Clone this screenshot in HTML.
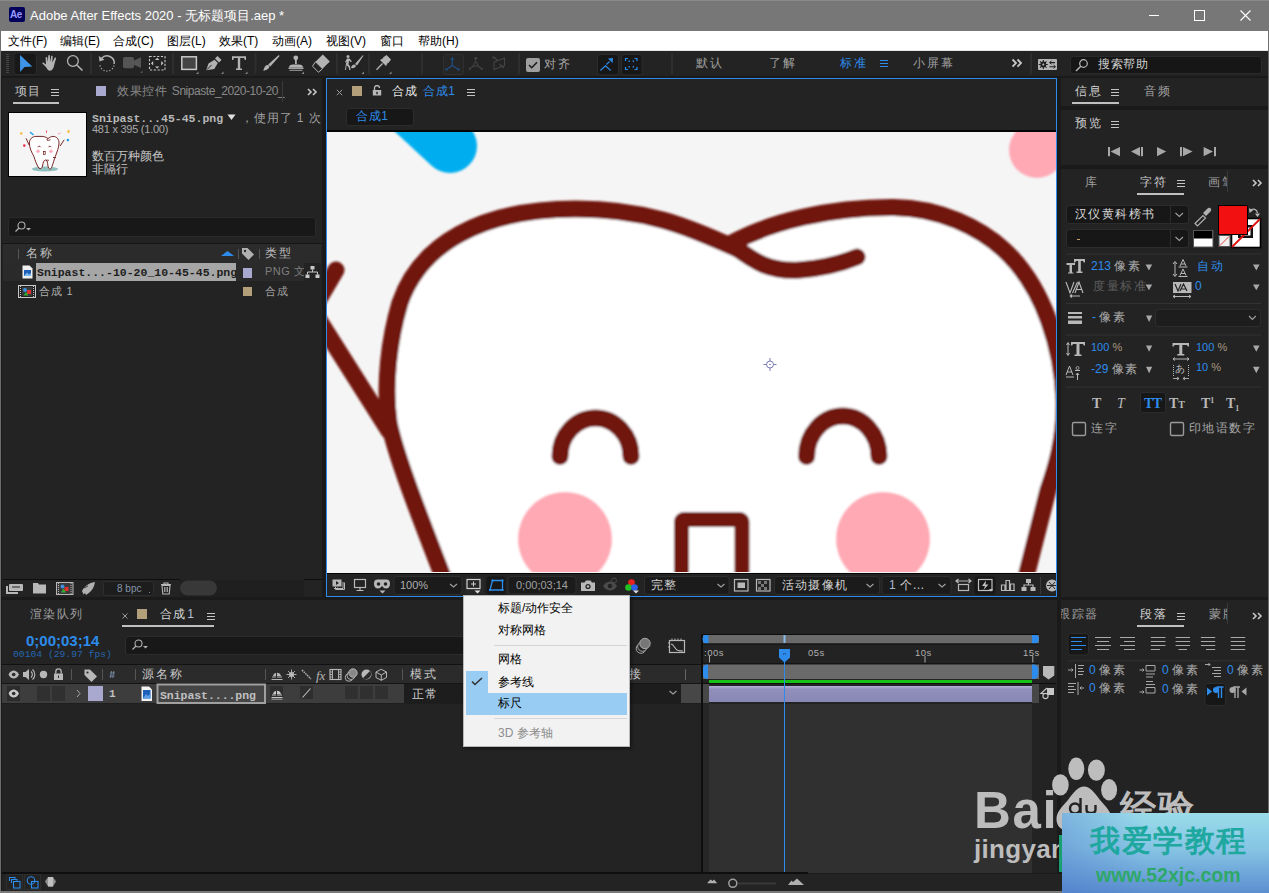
<!DOCTYPE html>
<html><head><meta charset="utf-8">
<style>
*{box-sizing:border-box;margin:0;padding:0}
html,body{width:1269px;height:893px;overflow:hidden;background:#1a1a1a;font-family:"Liberation Sans",sans-serif;font-size:12px;color:#a8a8a8}
.a{position:absolute}
.t{position:absolute;white-space:nowrap;line-height:1}
</style></head><body>
<!-- window border -->
<div class="a" style="left:0;top:0;width:1269px;height:893px;background:#1a1a1a"></div>
<!-- title bar -->
<div class="a" id="title" style="left:0;top:0;width:1269px;height:31px;background:#777"></div>
<div class="a" style="left:0;top:0;width:1269px;height:1px;background:#8a8a8a"></div>
<!-- menu bar -->
<div class="a" id="menu" style="left:0;top:31px;width:1269px;height:20px;background:#fff"></div>
<div class="a" style="left:0;top:50px;width:1269px;height:1px;background:#e6e6e6"></div>
<!-- toolbar -->
<div class="a" id="tool" style="left:1px;top:51px;width:1268px;height:25px;background:#232323"></div>
<!-- left gray border -->
<div class="a" style="left:0;top:31px;width:1px;height:862px;background:#6e6e6e"></div>
<!-- project panel -->
<div class="a" id="proj" style="left:2px;top:78px;width:320px;height:519px;background:#232323"></div>
<!-- comp viewer -->
<div class="a" id="comp" style="left:326px;top:78px;width:731px;height:519px;background:#232323;border:1px solid #2d8ceb"></div>
<!-- right panels -->
<div class="a" style="left:1061px;top:78px;width:208px;height:28px;background:#232323"></div>
<div class="a" style="left:1061px;top:110px;width:208px;height:55px;background:#232323"></div>
<div class="a" style="left:1061px;top:169px;width:208px;height:428px;background:#232323"></div>
<div class="a" style="left:1061px;top:600px;width:208px;height:273px;background:#232323"></div>
<!-- timeline -->
<div class="a" id="tl" style="left:2px;top:600px;width:1055px;height:273px;background:#232323"></div>
<!-- status -->
<div class="a" style="left:2px;top:874px;width:1267px;height:19px;background:#232323"></div>

<!-- TITLE -->
<div class="a" style="left:9px;top:7px;width:16px;height:15px;background:#00005b;border-radius:2px"></div>
<div class="t" style="left:10px;top:10px;font-size:10px;font-weight:bold;color:#9999ff;letter-spacing:-0.5px">Ae</div>
<div class="t" style="left:30px;top:9px;font-size:13px;color:#fff">Adobe After Effects 2020 - 无标题项目.aep *</div>
<div class="a" style="left:1149px;top:15px;width:10px;height:1px;background:#fff"></div>
<div class="a" style="left:1194px;top:10px;width:11px;height:11px;border:1px solid #fff"></div>
<svg class="a" style="left:1239px;top:9px" width="13" height="13"><path d="M1.5 1.5L11.5 11.5M11.5 1.5L1.5 11.5" stroke="#fff" stroke-width="1.1"/></svg>
<!-- MENU -->
<div class="t" style="left:8px;top:35px;color:#000">文件(F)</div>
<div class="t" style="left:60px;top:35px;color:#000">编辑(E)</div>
<div class="t" style="left:113px;top:35px;color:#000">合成(C)</div>
<div class="t" style="left:167px;top:35px;color:#000">图层(L)</div>
<div class="t" style="left:219px;top:35px;color:#000">效果(T)</div>
<div class="t" style="left:272px;top:35px;color:#000">动画(A)</div>
<div class="t" style="left:326px;top:35px;color:#000">视图(V)</div>
<div class="t" style="left:380px;top:35px;color:#000">窗口</div>
<div class="t" style="left:418px;top:35px;color:#000">帮助(H)</div>

<!-- TOOLBAR -->
<svg class="a" style="left:0;top:0" width="1269" height="78" viewBox="0 0 1269 78">
<g fill="#474747">
<rect x="6" y="54" width="3" height="1"/><rect x="6" y="56" width="3" height="1"/><rect x="6" y="58" width="3" height="1"/><rect x="6" y="60" width="3" height="1"/><rect x="6" y="62" width="3" height="1"/><rect x="6" y="64" width="3" height="1"/><rect x="6" y="66" width="3" height="1"/><rect x="6" y="68" width="3" height="1"/><rect x="6" y="70" width="3" height="1"/><rect x="6" y="72" width="3" height="1"/>
</g>
<rect x="14" y="53" width="22.5" height="21.5" rx="2.5" fill="#181818" stroke="#2b2b2b"/>
<path d="M20 55L32.3 66.5L24.5 67L20.1 72Z" fill="#3d94e8"/>
<!-- hand -->
<path d="M45.5 66.5C44 65 42.5 63.8 42.3 63.2C42.2 62.5 43.2 62.3 44 62.9L46 64.5L45.6 57.5C45.6 56.8 47 56.8 47.2 57.5L47.8 62L48.3 55.6C48.4 54.9 49.8 54.9 49.9 55.6L50.1 62L51.2 56.3C51.4 55.6 52.8 55.7 52.7 56.5L52.3 62.5L54.7 57.8C55.1 57.1 56.3 57.4 56.1 58.2L54.2 65C53.6 68.5 52 70.8 49.5 70.8C47.8 70.8 46.8 68 45.5 66.5Z" fill="#b3b3b3"/>
<!-- zoom -->
<circle cx="72.9" cy="61" r="5.4" fill="none" stroke="#b3b3b3" stroke-width="1.3"/>
<path d="M76.8 65L82.5 70.5" stroke="#b3b3b3" stroke-width="1.6"/>
<rect x="90" y="53" width="2" height="21" fill="#2e2e2e"/>
<!-- rotate -->
<path d="M114 65.5A7.2 7.2 0 0 1 99.8 64.5" fill="none" stroke="#b3b3b3" stroke-width="1.3" stroke-dasharray="1.1 1.9" />
<path d="M101.5 58.5A7.2 7.2 0 0 1 114.2 64" fill="none" stroke="#b3b3b3" stroke-width="1.5"/>
<path d="M98.8 56L99.5 61.5L104.5 59.8Z" fill="#b3b3b3"/>
<!-- camera -->
<rect x="123" y="57" width="11" height="11.2" rx="2" fill="#555"/>
<path d="M133 61L141 57.2V68L133 64.5Z" fill="#555"/>
<path d="M142.5 70.5V73H140Z" fill="#555"/>
<!-- pan behind -->
<rect x="149.5" y="56.5" width="15.5" height="13.5" fill="none" stroke="#c8c8c8" stroke-width="1.1" stroke-dasharray="2.2 1.6"/>
<path d="M157.2 57.8L159.4 60H155Z M157.2 68.6L159.4 66.4H155Z M151 63.2L153.2 61V65.4Z M163.4 63.2L161.2 61V65.4Z" fill="#c8c8c8"/>
<rect x="172" y="53" width="2" height="21" fill="#2e2e2e"/>
<!-- rect tool -->
<rect x="181.8" y="56.8" width="14.6" height="12.6" fill="#444" stroke="#c8c8c8" stroke-width="1.5"/>
<path d="M198.5 71.5V74H196Z M223.5 71.5V74H221Z M247.5 71.5V74H245Z M304 71.5V74H301.5Z M364 71.5V74H361.5Z M391.5 71.5V74H389Z" fill="#8a8a8a"/>
<!-- pen -->
<path d="M206.2 70.3L208.5 63.5L214.5 59.8L217.8 63L214.3 69Z" fill="#b3b3b3"/>
<path d="M207 69.6L211.7 64.9" stroke="#232323" stroke-width="1"/>
<path d="M215 58.5L217.5 56L221.5 60L219 62.5Z" fill="#b3b3b3"/>
<!-- type -->
<path d="M232 56.2H246V60H244.8L244 58H240.2V68.5H242V70H236V68.5H237.8V58H234L233.2 60H232Z" fill="#b3b3b3"/>
<rect x="254.5" y="53" width="2" height="21" fill="#2e2e2e"/>
<!-- brush -->
<path d="M263.3 70.8C264 68 265 65.5 267 65C268 64.8 269.2 65.5 269.5 66.5C269 69 266 70.5 263.3 70.8Z" fill="#b3b3b3"/>
<path d="M268.2 64.5L278.2 55.5C279.3 54.9 279.7 55.4 279.2 56.5L270.3 66.5Z" fill="#b3b3b3"/>
<!-- stamp -->
<circle cx="295.8" cy="57.8" r="2.4" fill="#b3b3b3"/>
<rect x="295" y="59" width="1.8" height="5" fill="#b3b3b3"/>
<path d="M289 67.5C289 65.5 290.5 64.5 293 64.5H299C301.5 64.5 303 65.5 303 67.5Z" fill="#b3b3b3"/>
<rect x="288.5" y="67.5" width="15" height="1.4" fill="#b3b3b3"/>
<rect x="289.5" y="69.8" width="13" height="0.9" fill="#b3b3b3"/>
<!-- eraser -->
<path d="M322.8 54.5L329.8 61.5L322.5 68.8L315.5 61.8Z" fill="#b3b3b3"/>
<path d="M315.5 61.8L322.5 68.8L318.5 72.3L312.5 66.2Z" fill="#232323" stroke="#b3b3b3" stroke-width="1"/>
<rect x="336" y="53" width="2" height="21" fill="#2e2e2e"/>
<!-- roto -->
<circle cx="348" cy="56.5" r="1.5" fill="#b3b3b3"/>
<path d="M345 62L347 58.5H349.5L352 61.5L350.5 62L349 60.5L348.5 64.5L350 66L350.5 70H349.3L348.5 67L346.5 65.2L346 70H345L346 63.5L346.8 61L345.8 62.5Z" fill="#b3b3b3"/>
<path d="M351 68C351.5 66 352.5 64.5 354.5 64.5L356 66C355.5 67.5 353.5 68.5 351 68Z" fill="#b3b3b3"/>
<path d="M355 64L362.5 55.5C363.2 55 363.5 55.3 363.3 56L357 65.5Z" fill="#b3b3b3"/>
<rect x="368" y="53" width="2" height="21" fill="#2e2e2e"/>
<!-- pin -->
<path d="M383 57.5L386.5 55L391 59.5L388.5 63Z" fill="#b3b3b3"/>
<path d="M380 60L386 56.5L389.5 60L386 66Z" fill="#b3b3b3"/>
<path d="M382.5 63.5L376.5 69.8" stroke="#b3b3b3" stroke-width="1.3"/>
<rect x="421" y="53" width="2" height="21" fill="#2e2e2e"/>
<!-- 3d axis -->
<rect x="443.5" y="54.5" width="20" height="20" rx="2.5" fill="#262626" stroke="#2f2f2f"/>
<path d="M452.3 59V65.4L446.5 69.6M452.3 65.4L458.5 69.6" fill="none" stroke="#1f5083" stroke-width="1.2"/>
<path d="M452.3 57L454.5 59.8H450.1Z M445.2 70.6L445.8 67.8L448 70.2Z M459.8 70.6L459.2 67.8L457 70.2Z" fill="#1f5083"/>
<g stroke="#454545" stroke-width="1.1" fill="none">
<path d="M475.7 58.5V62.5"/><circle cx="475.7" cy="64.4" r="1.9"/><path d="M474 65.5L469.8 68.8M477.4 65.5L481.6 68.8"/>
<path d="M494 62L504.5 58V65.5L494 69.5Z M494.5 57.5L497.5 60.5 M499.5 64L504 68"/>
</g>
<path d="M475.7 56.5L477.8 59H473.6Z M468.6 70L469 67.3L471 69.5Z M482.8 70L482.4 67.3L480.4 69.5Z M492.5 56.5L495.5 56.8L492.8 59.5Z" fill="#454545"/>
<rect x="518" y="53" width="2" height="21" fill="#2e2e2e"/>
<rect x="526" y="58" width="14" height="14" rx="2" fill="#9f9f9f"/>
<path d="M529 65L531.7 67.7L537 62.3" fill="none" stroke="#1a1a1a" stroke-width="1.6"/>
<rect x="597.5" y="54.5" width="21" height="20.5" rx="2.5" fill="#171717" stroke="#2c2c2c"/>
<path d="M600.4 70.5L605.5 65.9L610.7 70.5" fill="none" stroke="#2d8ceb" stroke-width="1.2"/>
<path d="M606.5 64.5L609.5 61.5" stroke="#2d8ceb" stroke-width="1.1"/>
<path d="M613 58L612.6 63L608 58.4Z" fill="#2d8ceb"/>
<rect x="621.5" y="54.5" width="20.5" height="20.5" rx="2.5" fill="#171717" stroke="#2c2c2c"/>
<path d="M625.5 61V58.5H628 M634.5 58.5H637V61 M637 67V69.5H634.5 M628 69.5H625.5V67" fill="none" stroke="#2d8ceb" stroke-width="1.2"/>
<path d="M629 62V61H630 M632.5 61H633.5V62 M633.5 66V67H632.5 M630 67H629V66" fill="none" stroke="#2d8ceb" stroke-width="1.1"/>
<rect x="671" y="53" width="2" height="21" fill="#2e2e2e"/>
<rect x="1030" y="53" width="2" height="21" fill="#2e2e2e"/>
<!-- workspace icon -->
<rect x="1038" y="59" width="19" height="11" rx="1" fill="#b4b4b4"/>
<circle cx="1043.3" cy="64.5" r="2.9" fill="#1e1e1e"/>
<path d="M1043.3 60V69M1038.8 64.5H1047.8M1040.1 61.3L1046.5 67.7M1046.5 61.3L1040.1 67.7" stroke="#1e1e1e" stroke-width="1.1"/>
<circle cx="1043.3" cy="64.5" r="1.1" fill="#b4b4b4"/>
<path d="M1050 62.6H1055M1049.5 66.7H1055" stroke="#1e1e1e" stroke-width="1.1"/>
<path d="M1051.5 61L1049.5 62.6L1051.5 64.2M1053.5 65.1L1055.5 66.7L1053.5 68.3" fill="none" stroke="#1e1e1e" stroke-width="1"/>
<path d="M1012.5 59.5L1016 63.1L1012.5 66.7M1017.5 59.5L1021 63.1L1017.5 66.7" fill="none" stroke="#c8c8c8" stroke-width="1.8"/>
<path d="M880 60.5H888M880 63.5H888M880 66.5H888" stroke="#2d8ceb" stroke-width="1.1"/>
</svg>
<div class="t" style="left:544px;top:58px;font-size:12px;letter-spacing:2px;color:#a8a8a8">对齐</div>
<div class="t" style="left:696px;top:57px;font-size:12px;letter-spacing:2px;color:#a0a0a0">默认</div>
<div class="t" style="left:769px;top:57px;font-size:12px;letter-spacing:2px;color:#a0a0a0">了解</div>
<div class="t" style="left:840px;top:57px;font-size:12px;letter-spacing:2px;color:#2d8ceb">标准</div>
<div class="t" style="left:913px;top:57px;font-size:12px;letter-spacing:2px;color:#a0a0a0">小屏幕</div>
<div class="a" style="left:1070px;top:56px;width:192px;height:18px;background:#161616;border-radius:3px;border:1px solid #2a2a2a"></div>
<svg class="a" style="left:1074px;top:58px" width="16" height="14"><circle cx="9.5" cy="5.5" r="3.8" fill="none" stroke="#b8b8b8" stroke-width="1.2"/><path d="M6.8 8.3L2 13" stroke="#b8b8b8" stroke-width="1.4"/></svg>
<div class="t" style="left:1098px;top:58px;font-size:12px;letter-spacing:0.5px;color:#d0d0d0">搜索帮助</div>

<!-- PROJECT PANEL -->
<div class="t" style="left:15px;top:85px;font-size:12px;letter-spacing:1px;color:#c4c4c4">项目</div>
<svg class="a" style="left:50px;top:88px" width="10" height="9"><path d="M1 1.5H9M1 4.5H9M1 7.5H9" stroke="#c4c4c4" stroke-width="1"/></svg>
<div class="a" style="left:13px;top:102px;width:46px;height:2px;background:#c0c0c0"></div>
<div class="a" style="left:96px;top:86px;width:10px;height:10px;background:#a9a9cf"></div>
<div class="t" style="left:117px;top:85px;font-size:12px;letter-spacing:0.7px;color:#8a8a8a">效果控件 <span style="letter-spacing:-0.45px">Snipaste_2020-10-20_</span></div>
<div class="a" style="left:282px;top:81px;width:1px;height:21px;background:#3a3a3a"></div>
<svg class="a" style="left:307px;top:88px" width="12" height="8"><path d="M1 1L4 4L1 7M6 1L9 4L6 7" fill="none" stroke="#c8c8c8" stroke-width="1.6"/></svg>
<div class="a" style="left:8px;top:112px;width:79px;height:65px;background:#f5f5f5;border:1px solid #000"></div>
<svg class="a" style="left:9px;top:113px" width="77" height="63" viewBox="9 113 77 63">
<ellipse cx="45" cy="169" rx="13" ry="2.6" fill="#8fbfbf"/>
<path d="M36 136.4C32 136.4 29.4 139.5 29.4 143C29.4 148 31.5 152 33.9 156.4C35 160 37 166 39 168.2C40.5 169 42 168.5 42.5 166L43 163.5C43.5 161 45 159.5 46.2 160C47.5 161 47.5 163 47.8 165C48.2 168 49 169 50.3 169C51.8 168.5 53 163 55.3 156.4C57 152 59 147 59 143C59 139 56.5 136.4 53 136.4C51 136.4 49.5 137.5 48 138.6C46.5 137.5 44.5 136.4 42 136.4Z" fill="#fff" stroke="#6a1010" stroke-width="0.9"/>
<path d="M48 138.6C47 139.5 46.5 139.8 47 140.2C48 140.5 49.5 140.3 50.5 139.8" fill="none" stroke="#6a1010" stroke-width="0.8"/>
<path d="M53 157.5H56M46 160.5C47 160 48 160 49 160.5" stroke="#6a1010" stroke-width="0.8" fill="none"/>
<path d="M37.8 147.2A1.5 1.5 0 0 1 40.6 147.2M48.4 147.2A1.5 1.5 0 0 1 51.2 147.2" fill="none" stroke="#6a1010" stroke-width="0.8"/>
<circle cx="38" cy="151.2" r="1.7" fill="#ffaab8"/><circle cx="51" cy="151.2" r="1.7" fill="#ffaab8"/>
<rect x="43.6" y="151.5" width="1.6" height="3" fill="none" stroke="#6a1010" stroke-width="0.7"/>
<path d="M26.1 138.3L29.1 145M64.2 139.8L60.1 146" stroke="#6a1010" stroke-width="0.9"/>
<circle cx="21.3" cy="133.4" r="1.2" fill="#f6b52a"/>
<path d="M30.5 132.5L33 134.5" stroke="#1fa0e8" stroke-width="1.6" stroke-linecap="round"/>
<path d="M46.5 130.5V132.8" stroke="#f05070" stroke-width="1.1"/>
<path d="M58 134L60.5 133" stroke="#f8a8b8" stroke-width="1.2"/>
<rect x="67.5" y="130.2" width="2" height="2.6" fill="#f6b52a"/>
<circle cx="24.3" cy="145.6" r="1.3" fill="#f03050"/>
<circle cx="67.9" cy="140.1" r="1.3" fill="#1fa0e8"/>
</svg>
<div class="t" style="left:92px;top:112px;font:bold 11.5px 'Liberation Mono',monospace;color:#b8b8b8">Snipast...45-45.png</div>
<svg class="a" style="left:227px;top:114px" width="9" height="7"><path d="M0.5 0.5H8.5L4.5 6Z" fill="#e0e0e0"/></svg>
<div class="t" style="left:241px;top:112px;font-size:12px;letter-spacing:0.9px;color:#a0a0a0">，使用了 1 次</div>
<div class="t" style="left:92px;top:124px;font-size:11px;letter-spacing:-0.25px;color:#a8a8a8">481 x 395 (1.00)</div>
<div class="t" style="left:92px;top:150px;font-size:12px;color:#c8c8c8">数百万种颜色</div>
<div class="t" style="left:92px;top:163px;font-size:12px;color:#c8c8c8">非隔行</div>
<div class="a" style="left:8px;top:217px;width:308px;height:20px;background:#181818;border:1px solid #2a2a2a;border-radius:3px"></div>
<svg class="a" style="left:14px;top:221px" width="20" height="12"><circle cx="7.5" cy="4.5" r="3.5" fill="none" stroke="#b0b0b0" stroke-width="1.1"/><path d="M5 7L1.5 10.5" stroke="#b0b0b0" stroke-width="1.3"/><path d="M12 7H17L14.5 9.5Z" fill="#b0b0b0"/></svg>
<div class="a" style="left:2px;top:243px;width:320px;height:1px;background:#151515"></div>
<div class="a" style="left:3px;top:244px;width:318px;height:19px;background:#2b2b2b"></div>
<div class="a" style="left:18px;top:249px;width:1px;height:10px;background:#555"></div>
<div class="t" style="left:26px;top:247px;font-size:12px;letter-spacing:1.5px;color:#c0c0c0">名称</div>
<svg class="a" style="left:221px;top:251px" width="13" height="5"><path d="M0 5L6.5 0L13 5Z" fill="#2d8ceb"/></svg>
<div class="a" style="left:238px;top:249px;width:1px;height:10px;background:#555"></div>
<svg class="a" style="left:241px;top:247px" width="14" height="13"><path d="M1 1H6.5L13 7.5L7.5 13L1 6.5Z" fill="#b0b0b0"/><circle cx="4" cy="4" r="1.2" fill="#2b2b2b"/></svg>
<div class="a" style="left:259px;top:249px;width:1px;height:10px;background:#555"></div>
<div class="t" style="left:265px;top:247px;font-size:12px;letter-spacing:1.5px;color:#c0c0c0">类型</div>
<div class="a" style="left:3px;top:263px;width:301px;height:18px;background:#2a2a2a"></div>
<div class="a" style="left:36px;top:263px;width:200px;height:18px;background:#a6a6a6"></div>
<div class="t" style="left:37px;top:266px;width:199px;overflow:hidden;font:bold 11.5px 'Liberation Mono',monospace;color:#1e1e1e">Snipast...-10-20_10-45-45.png</div>
<svg class="a" style="left:22px;top:265px" width="11" height="14"><path d="M0.5 0.5H7.5L10.5 3.5V13.5H0.5Z" fill="#f0f0f0"/><rect x="2" y="5" width="7" height="6" fill="#1e5fb8"/><path d="M2 11L5 7.5L7 9.5L9 8V11Z" fill="#7ab8f0"/></svg>
<div class="a" style="left:243px;top:268px;width:9px;height:10px;background:#a9a9cf"></div>
<div class="t" style="left:265px;top:266px;font-size:11px;letter-spacing:0.5px;color:#7e7e7e;width:39px;overflow:hidden">PNG 文件</div>
<svg class="a" style="left:305px;top:265px" width="15" height="14"><rect x="5.5" y="1" width="4" height="3.5" fill="#c8c8c8"/><rect x="0.5" y="9.5" width="4" height="3.5" fill="#c8c8c8"/><rect x="10.5" y="9.5" width="4" height="3.5" fill="#c8c8c8"/><path d="M7.5 4.5V7M2.5 9.5V7H12.5V9.5" fill="none" stroke="#c8c8c8" stroke-width="1"/></svg>
<svg class="a" style="left:18px;top:285px" width="18" height="13"><rect x="0.5" y="0.5" width="17" height="12" fill="none" stroke="#c8c8c8"/><path d="M2.5 1V12M15.5 1V12" stroke="#c8c8c8" stroke-dasharray="1 1"/><rect x="4" y="2" width="10" height="9" fill="#3a3a3a"/><circle cx="7" cy="5" r="2" fill="#3d8fe0"/><path d="M9 5H13V9H9Z" fill="#e03030"/><path d="M5.5 10.5L8 7L10.5 10.5Z" fill="#30b030"/></svg>
<div class="t" style="left:39px;top:286px;font-size:11px;letter-spacing:0.8px;color:#b0b0b0">合成 1</div>
<div class="a" style="left:243px;top:287px;width:9px;height:9px;background:#b3a07b"></div>
<div class="t" style="left:265px;top:286px;font-size:11px;letter-spacing:0.8px;color:#a0a0a0">合成</div>

<!-- project bottom bar -->
<div class="a" style="left:3px;top:579px;width:177px;height:1px;background:#0e0e0e"></div>
<div class="a" style="left:304px;top:579px;width:18px;height:1px;background:#0e0e0e"></div>
<div class="a" style="left:180px;top:580px;width:124px;height:17px;background:#1f1f1f"></div>
<svg class="a" style="left:0;top:578px" width="322" height="20" viewBox="0 578 322 20">
<g fill="#b8b8b8">
<rect x="9" y="584" width="14" height="7" rx="1"/>
<rect x="6" y="586" width="2" height="8"/><rect x="6" y="592" width="12" height="2"/>
</g>
<path d="M12 587H20" stroke="#232323" stroke-width="1"/>
<path d="M33 583H38L39 584.5H46V593.5H33Z" fill="#b8b8b8"/>
<rect x="56.5" y="582.5" width="16.5" height="12" fill="#3a3a3a" stroke="#b8b8b8"/>
<path d="M58.5 583V594M71 583V594" stroke="#b8b8b8" stroke-dasharray="1 1"/>
<circle cx="62.5" cy="586.5" r="2" fill="#3d8fe0"/><rect x="64.5" y="587" width="4" height="4" fill="#e03030"/><path d="M61 592.5L63.5 588.5L66 592.5Z" fill="#30b030"/>
<path d="M82 591C84 587 88 583 95 582C94 588 91 592 86 595L85 593L83.5 594.5Z" fill="#b0b0b0"/>
<path d="M84 588L88 586" stroke="#232323" stroke-width="0.8"/>
<rect x="103.5" y="581.5" width="50" height="14" rx="2" fill="#1d1d1d" stroke="#2e2e2e"/>
<rect x="149" y="592" width="1" height="1" fill="#6a8bb0"/>
<path d="M161 584.5H171M164 584.5V583H168V584.5M162 585.5L162.8 594H169.2L170 585.5Z" fill="none" stroke="#b8b8b8" stroke-width="1.1"/>
<path d="M164.5 587V592M166 587V592M167.5 587V592" stroke="#b8b8b8" stroke-width="0.8"/>
<rect x="180" y="580.5" width="37" height="15" rx="7.5" fill="#383838"/>
</svg>
<div class="t" style="left:117px;top:584px;font-size:10px;color:#8595ab">8 bpc</div>

<!-- COMP VIEWER -->
<svg class="a" style="left:336px;top:89px" width="7" height="7"><path d="M0.8 0.8L6.2 6.2M6.2 0.8L0.8 6.2" stroke="#9a9a9a" stroke-width="1"/></svg>
<div class="a" style="left:352px;top:86px;width:10px;height:10px;background:#b3a07b"></div>
<svg class="a" style="left:372px;top:85px" width="10" height="11"><path d="M2.5 5V3A2.5 2.5 0 0 1 7.5 3" fill="none" stroke="#b8b8b8" stroke-width="1.3"/><rect x="0.8" y="5" width="8.4" height="5.5" fill="#b8b8b8"/><rect x="4.3" y="6.8" width="1.4" height="2.4" fill="#232323"/></svg>
<div class="t" style="left:392px;top:85px;font-size:12px;letter-spacing:0.6px;color:#e8e8e8">合成</div>
<div class="t" style="left:423px;top:85px;font-size:12px;letter-spacing:0.6px;color:#2d8ceb">合成1</div>
<svg class="a" style="left:466px;top:88px" width="10" height="9"><path d="M1 1.5H9M1 4.5H9M1 7.5H9" stroke="#c4c4c4" stroke-width="1"/></svg>
<div class="a" style="left:346px;top:108px;width:68px;height:18px;background:#171717;border:1px solid #2c2c2c;border-radius:3px"></div>
<div class="t" style="left:356px;top:110px;font-size:12px;letter-spacing:0.6px;color:#2d8ceb">合成1</div>
<div class="a" style="left:327px;top:130px;width:729px;height:2px;background:#050505"></div>
<div class="a" id="compimg" style="left:327px;top:132px;width:729px;height:441px;background:#f5f5f5;overflow:hidden"><svg width="729" height="440" viewBox="327 132 729 440" style="position:absolute;left:0;top:0">
<defs><filter id="bl" x="-5%" y="-5%" width="110%" height="110%"><feGaussianBlur stdDeviation="0.9"/></filter></defs>
<g filter="url(#bl)">
<path d="M380 81L450 146" stroke="#00aeef" stroke-width="54" stroke-linecap="round"/>
<circle cx="1037" cy="150" r="28" fill="#ffa9b5"/>
<path d="M740 250C705 236 660 209 576 209C480 209 420 245 400 303C389 340 384 385 389 422C395 455 425 530 452 600L1020 600L1048 490C1055 470 1065 440 1064 400C1062 350 1045 288 1004 250C980 228 940 208 894 207.5C830 207 770 222 730 244Z" fill="#fff"/>
<circle cx="565" cy="539" r="47" fill="#ffa9b5"/>
<circle cx="883" cy="539" r="47" fill="#ffa9b5"/>
<g fill="none" stroke="#711410" stroke-width="17" stroke-linecap="round">
<path d="M740 250C705 236 660 209 576 209C480 209 420 245 400 303C389 340 384 385 389 422C395 455 425 530 452 600"/>
<path d="M730 244C770 222 830 207 894 207.5C940 208 980 228 1004 250C1045 288 1062 350 1064 400C1065 440 1055 470 1048 490L1020 600"/>
<path d="M735 247C755 262 770 272 800 270C825 268 845 262 857 257"/>
<path d="M303 295L389 431"/>
<path d="M336 270L316 304"/>
<path d="M560 456.5A35.5 38.5 0 0 1 631 456.5" stroke-width="17"/>
<path d="M806.6 456.5A36.2 40.5 0 0 1 879 456.5" stroke-width="17"/>
<path d="M681.5 600V522.5Q681.5 519.5 684.5 519.5H739Q742 519.5 742 522.5V600" stroke-width="15" stroke-linecap="butt"/>
</g>
</g>
<g stroke="#7a7ab8" fill="none" stroke-width="1">
<circle cx="770" cy="364.5" r="3.5"/>
<path d="M770 358V361M770 368V371M763.5 364.5H766.5M773.5 364.5H776.5"/>
</g>
<circle cx="770" cy="364.5" r="0.8" fill="#7a7ab8"/>
</svg></div>
<div class="a" style="left:327px;top:573px;width:729px;height:1px;background:#050505"></div>
<!-- comp bottom bar -->
<svg class="a" style="left:326px;top:574px" width="731" height="23" viewBox="326 574 731 23">
<g fill="none" stroke="#b8b8b8" stroke-width="1">
<path d="M335.5 586.5V589.5H344.5V582.5" /><path d="M337.5 588V587.5"/>
</g>
<rect x="332.5" y="579.5" width="9" height="7" fill="#b8b8b8"/>
<path d="M336 581L339 583L336 585Z" fill="#232323"/>
<path d="M343 582V588.5H334" fill="none" stroke="#b8b8b8"/>
<rect x="354.5" y="579.5" width="11" height="8" fill="none" stroke="#b8b8b8" stroke-width="1.2"/>
<path d="M360 588V590M356.5 590.5H363.5" stroke="#b8b8b8" stroke-width="1.2"/>
<path d="M374 584C374 580 376 579.5 378 579.5H386C388 579.5 390 580 390 584C390 587 388 588.5 386 588.5C384 588.5 383 587 382 586C381 587 380 588.5 378 588.5C376 588.5 374 587 374 584Z" fill="#b8b8b8"/>
<circle cx="378.5" cy="584" r="1.8" fill="#232323"/><circle cx="385.5" cy="584" r="1.8" fill="#232323"/>
<path d="M379.5 590.5H385.5L382.5 593.5Z" fill="#b8b8b8"/>
<rect x="394" y="576.5" width="68" height="18" rx="3" fill="#1b1b1b" stroke="#2e2e2e"/>
<path d="M450 584L453.5 587L457 584" fill="none" stroke="#a0a0a0" stroke-width="1.1"/>
<rect x="465" y="576.5" width="19" height="18" rx="3" fill="#282828"/>
<rect x="467" y="579.5" width="13" height="9" fill="none" stroke="#d0d0d0" stroke-width="1.2"/>
<path d="M473.5 581.5V586.5M471 584H476" stroke="#d0d0d0" stroke-width="1"/>
<path d="M470 579V581M477 579V581M470 587V589M477 587V589" stroke="#232323" stroke-width="0" />
<path d="M474.5 590.5H480.5L477.5 593.5Z" fill="#e0e0e0"/>
<rect x="486.5" y="576.5" width="19" height="18" rx="3" fill="#171717"/>
<path d="M490 590L492.5 580.5H502.5V590Z" fill="none" stroke="#2d8ceb" stroke-width="1.3"/>
<rect x="489" y="589" width="2" height="2" fill="#2d8ceb"/><rect x="501.5" y="589" width="2" height="2" fill="#2d8ceb"/><rect x="491.5" y="579.5" width="2" height="2" fill="#2d8ceb"/><rect x="501.5" y="579.5" width="2" height="2" fill="#2d8ceb"/>
<rect x="508" y="576.5" width="68" height="17.5" rx="3" fill="#1b1b1b" stroke="#2e2e2e"/>
<path d="M581 582.5H584.5L586 580.5H590.5L592 582.5H595V591H581Z" fill="#b8b8b8"/>
<circle cx="588" cy="586.5" r="2.6" fill="#232323"/><circle cx="588" cy="586.5" r="1.3" fill="#b8b8b8"/>
<path d="M603 586C605 582.5 608 581.5 610 581.5C612 581.5 615 582.5 617 586C615 589.5 612 590.5 610 590.5C608 590.5 605 589.5 603 586Z" fill="#4a4a4a"/>
<circle cx="610" cy="586" r="2.2" fill="#232323"/>
<circle cx="614" cy="580.5" r="2.5" fill="none" stroke="#4a4a4a" stroke-width="1"/>
<circle cx="631.5" cy="582.5" r="3.3" fill="#e82020"/>
<circle cx="628.5" cy="587.5" r="3.3" fill="#20c020"/>
<circle cx="634.5" cy="587.5" r="3.3" fill="#3060e8"/>
<path d="M633 590.5H639L636 593.5Z" fill="#e0e0e0"/>
<rect x="644.5" y="576.5" width="84.5" height="18" rx="3" fill="#1b1b1b" stroke="#2e2e2e"/>
<path d="M717.5 584L721 587L724.5 584" fill="none" stroke="#a0a0a0" stroke-width="1.1"/>
<rect x="734.5" y="579.5" width="13.5" height="11.5" fill="none" stroke="#b8b8b8" stroke-width="1.2"/>
<rect x="737.5" y="582.5" width="7.5" height="5.5" fill="#b8b8b8"/>
<rect x="756.5" y="579.5" width="13.5" height="11.5" fill="none" stroke="#b8b8b8" stroke-width="1.2"/>
<path d="M758 581H761V584H758ZM764 581H767V584H764ZM761 584H764V587H761ZM758 587H761V590H758ZM764 587H767V590H764Z" fill="#777"/>
<rect x="774.5" y="576.5" width="105" height="18" rx="3" fill="#1b1b1b" stroke="#2e2e2e"/>
<path d="M866.5 584L870 587L873.5 584" fill="none" stroke="#a0a0a0" stroke-width="1.1"/>
<rect x="882" y="576.5" width="69" height="18" rx="3" fill="#1b1b1b" stroke="#2e2e2e"/>
<path d="M938.5 584L942 587L945.5 584" fill="none" stroke="#a0a0a0" stroke-width="1.1"/>
<path d="M956 581H971M958.5 579L956 581L958.5 583M968.5 579L971 581L968.5 583" fill="none" stroke="#b8b8b8" stroke-width="1.2"/>
<rect x="958.5" y="584.5" width="10" height="6" fill="none" stroke="#b8b8b8" stroke-width="1.2"/>
<rect x="974.5" y="576.5" width="21" height="18" rx="3" fill="#171717"/>
<rect x="978.5" y="579.5" width="13.5" height="11" fill="none" stroke="#c0c0c0" stroke-width="1.2"/>
<path d="M986 580.5L982 586H985L983.5 590L988.5 584.5H985.5Z" fill="#c0c0c0"/>
<path d="M989 589H993L991 591.5Z" fill="#c0c0c0"/>
<path d="M1001 590.5H1015M1001.5 590V585H1005V590M1006 590V580.5H1009.5V590M1010.5 590V584H1014V590" fill="none" stroke="#b8b8b8" stroke-width="1.2"/>
<rect x="1026" y="579" width="5" height="4" fill="#b8b8b8"/><rect x="1021.5" y="587" width="5" height="4" fill="#b8b8b8"/><rect x="1030.5" y="587" width="5" height="4" fill="#b8b8b8"/>
<path d="M1028.5 583V585M1024 587V585H1033V587" fill="none" stroke="#b8b8b8" stroke-width="1.2"/>
<rect x="1040" y="577" width="1" height="17" fill="#3a3a3a"/>
<circle cx="1052" cy="585.5" r="6" fill="#b8b8b8"/>
<path d="M1049 582L1055 589M1055 582L1049 589M1047 585.5H1057" stroke="#232323" stroke-width="1"/>
</svg>
<div class="a" style="left:1056px;top:574px;width:1px;height:23px;background:#2d8ceb"></div>
<div class="t" style="left:400px;top:580px;font-size:11px;color:#b0b0b0">100%</div>
<div class="t" style="left:516px;top:580px;font-size:11px;color:#a0a0a0">0;00;03;14</div>
<div class="t" style="left:651px;top:579px;font-size:12px;letter-spacing:1px;color:#d0d0d0">完整</div>
<div class="t" style="left:782px;top:579px;font-size:12px;letter-spacing:1.2px;color:#d0d0d0">活动摄像机</div>
<div class="t" style="left:889px;top:579px;font-size:12px;letter-spacing:0.5px;color:#d0d0d0"><span style="color:#a8b8d0">1</span> 个…</div>

<!-- TIMELINE -->
<div class="t" style="left:30px;top:608px;font-size:12px;letter-spacing:1.3px;color:#a0a0a0">渲染队列</div>
<svg class="a" style="left:122px;top:613px" width="6" height="6"><path d="M0.5 0.5L5.5 5.5M5.5 0.5L0.5 5.5" stroke="#9a9a9a" stroke-width="1"/></svg>
<div class="a" style="left:137px;top:609px;width:10px;height:10px;background:#b3a07b"></div>
<div class="t" style="left:160px;top:608px;font-size:12px;letter-spacing:0.6px;color:#d8d8d8">合成<span style="color:#b8c0d8;margin-left:2px">1</span></div>
<svg class="a" style="left:206px;top:612px" width="10" height="9"><path d="M1 1.5H9M1 4.5H9M1 7.5H9" stroke="#c4c4c4" stroke-width="1"/></svg>
<div class="a" style="left:122px;top:625px;width:92px;height:2px;background:#c0c0c0"></div>
<div class="t" style="left:26px;top:632px;font:bold 15px 'Liberation Sans',sans-serif;color:#2d8ceb">0;00;03;14</div>
<div class="t" style="left:13px;top:649px;font:9.7px 'Liberation Mono',monospace;color:#2566b0">00104 (29.97 fps)</div>
<div class="a" style="left:125px;top:636px;width:345px;height:19px;background:#181818;border-top:1px solid #2c2c2c;border-bottom:1px solid #2c2c2c;border-left:1px solid #2c2c2c;border-radius:3px 0 0 3px"></div>
<svg class="a" style="left:131px;top:639px" width="20" height="12"><circle cx="7.5" cy="4.5" r="3.5" fill="none" stroke="#b0b0b0" stroke-width="1.1"/><path d="M5 7L1.5 10.5" stroke="#b0b0b0" stroke-width="1.3"/><path d="M12 7H17L14.5 9.5Z" fill="#b0b0b0"/></svg>
<!-- motion blur + graph icons -->
<svg class="a" style="left:630px;top:634px" width="60" height="22" viewBox="630 634 60 22">
<circle cx="641" cy="648.5" r="4.8" fill="none" stroke="#a8a8a8" stroke-width="1"/>
<circle cx="642.5" cy="646.5" r="4.8" fill="#232323" stroke="#a8a8a8" stroke-width="1"/>
<circle cx="645" cy="643.5" r="5.2" fill="#777" stroke="#a8a8a8" stroke-width="1"/>
<rect x="669.5" y="640.5" width="15" height="12" fill="none" stroke="#b8b8b8" stroke-width="1.2"/>
<path d="M671 644C674 644 675 650 678 650.5C680 651 681 651 683 651" fill="none" stroke="#b8b8b8" stroke-width="1.1"/>
<path d="M672 638.5V640M675 638.5V640M678 638.5V640M681 638.5V640M668 643H669.5M668 647H669.5" stroke="#b8b8b8" stroke-width="1"/>
</svg>
<!-- header row -->
<div class="a" style="left:2px;top:664px;width:700px;height:1px;background:#111"></div>
<div class="a" style="left:2px;top:665px;width:700px;height:18px;background:#2b2b2b"></div>
<div class="a" style="left:2px;top:683px;width:700px;height:1px;background:#151515"></div>
<div class="a" style="left:2px;top:684px;width:402px;height:19px;background:#3d3d3d"></div>
<div class="a" style="left:404px;top:684px;width:277px;height:19px;background:#1d1d1d"></div>
<div class="a" style="left:681px;top:684px;width:20px;height:19px;background:#474747"></div>
<div class="a" style="left:2px;top:703px;width:700px;height:1px;background:#1e1e1e"></div>
<svg class="a" style="left:0;top:664px" width="702" height="40" viewBox="0 664 702 40">
<g fill="#b8b8b8">
<path d="M8.5 674.5C10 671.5 12 670.5 13.7 670.5C15.4 670.5 17.4 671.5 19 674.5C17.4 677.5 15.4 678.5 13.7 678.5C12 678.5 10 677.5 8.5 674.5Z"/>
<path d="M23 672H25.5L29 669V680L25.5 677H23Z"/>
<circle cx="43.5" cy="674.5" r="3.7"/>
<path d="M54 673.5H63V680H54Z"/>
<path d="M55.8 673.5V671.5A2.7 2.7 0 0 1 61.2 671.5V673.5" fill="none" stroke="#b8b8b8" stroke-width="1.3"/>
<path d="M84.5 669.5H90L97 676.5L91.5 682L84.5 675Z"/>
<path d="M8.5 693.5C10 690.5 12 689.5 13.7 689.5C15.4 689.5 17.4 690.5 19 693.5C17.4 696.5 15.4 697.5 13.7 697.5C12 697.5 10 696.5 8.5 693.5Z" fill="#c8c8c8"/>
</g>
<circle cx="13.7" cy="674.5" r="1.8" fill="#2b2b2b"/>
<path d="M31 671.5A4 4 0 0 1 31 677.5M32.5 669.5A6.5 6.5 0 0 1 32.5 679.5" fill="none" stroke="#b8b8b8" stroke-width="1.1"/>
<circle cx="87.5" cy="672.5" r="1.1" fill="#2b2b2b"/>
<rect x="58" y="675.5" width="1" height="2.5" fill="#2b2b2b"/>
<rect x="71" y="669" width="1" height="11" fill="#555"/><rect x="102" y="669" width="1" height="11" fill="#555"/><rect x="135" y="669" width="1" height="11" fill="#555"/><rect x="265" y="669" width="1" height="11" fill="#555"/><rect x="402" y="669" width="1" height="11" fill="#555"/>
<path d="M110 673H115M109.5 676H114.5M111.5 671L110.5 678M113.8 671L112.8 678" stroke="#7a8aa8" stroke-width="0.9"/>
<rect x="7" y="686" width="13" height="15" fill="#2c2c2c"/>
<path d="M8.5 693.5C10 690.5 12 689.5 13.7 689.5C15.4 689.5 17.4 690.5 19 693.5C17.4 696.5 15.4 697.5 13.7 697.5C12 697.5 10 696.5 8.5 693.5Z" fill="#c8c8c8"/>
<circle cx="13.7" cy="693.5" r="1.8" fill="#2c2c2c"/>
<rect x="37" y="686" width="13" height="15" fill="#303030"/><rect x="52" y="686" width="13" height="15" fill="#303030"/>
<path d="M77 690L80 693.5L77 697" fill="none" stroke="#a8a8a8" stroke-width="1"/>
<rect x="88" y="686" width="15" height="15" fill="#a9a9cf"/>
<path d="M141.5 686.5H149L152 689.5V701H141.5Z" fill="#f4f4f4"/>
<rect x="143" y="690" width="7.5" height="8.5" fill="#1e5fb8"/><path d="M143 698.5L146 694L148 696L150.5 693.5V698.5Z" fill="#5aa0e8"/>
<rect x="157.5" y="684.5" width="107.5" height="18.5" fill="#454545" stroke="#a0a0a0" stroke-width="2"/>
<!-- switches header -->
<g fill="#b8b8b8">
<path d="M272 677H282M271.5 679.5H282.5" stroke="#b8b8b8" stroke-width="1.2"/>
<path d="M273 676A4.2 4.6 0 0 1 281 676Z"/>
<path d="M276.5 671V678" stroke="#2b2b2b" stroke-width="1"/>
<circle cx="291.5" cy="674.5" r="2.5"/>
<path d="M291.5 669.5V679.5M286.5 674.5H296.5M288 671L295 678M295 671L288 678" stroke="#b8b8b8" stroke-width="0.9"/>
<path d="M302 670L311 679" stroke="#b8b8b8" stroke-width="1.4" stroke-dasharray="1.6 0.8"/>
<rect x="330" y="669.5" width="11" height="10" fill="none" stroke="#b8b8b8" stroke-width="1.1"/>
<path d="M332.5 670V679M338.5 670V679M330 672H332.5M330 674.5H332.5M330 677H332.5M338.5 672H341M338.5 674.5H341M338.5 677H341" stroke="#b8b8b8" stroke-width="0.9"/>
<circle cx="349" cy="677.5" r="3.8" fill="none" stroke="#b8b8b8" stroke-width="0.9"/>
<circle cx="351" cy="675.5" r="4" fill="#2b2b2b" stroke="#b8b8b8" stroke-width="0.9"/>
<circle cx="353" cy="673" r="4.2" fill="#888" stroke="#b8b8b8" stroke-width="0.9"/>
<circle cx="366.5" cy="674.5" r="5"/>
<path d="M370 671L363 678A5 5 0 0 0 370 671Z" fill="#2b2b2b"/>
<path d="M381.3 669.3L386.5 672V677.5L381.3 680.3L376 677.5V672Z M376 672L381.3 675L386.5 672M381.3 675V680.3" fill="none" stroke="#b8b8b8" stroke-width="1"/>
</g>
<path d="M272 696.5H282M271.5 699H282.5" stroke="#c8c8c8" stroke-width="1.2"/>
<rect x="270" y="686" width="13" height="12.5" fill="#2e2e2e" />
<path d="M272 695H282M271.5 697.5H282.5" stroke="#c8c8c8" stroke-width="1.2"/>
<path d="M273 694A4.2 4.6 0 0 1 281 694Z" fill="#c8c8c8"/><path d="M276.5 689V696" stroke="#2e2e2e" stroke-width="1"/>
<rect x="300" y="686" width="13" height="13" fill="#2e2e2e"/>
<path d="M302.5 697.5L310.5 688.5" stroke="#c0c0c0" stroke-width="1.1"/>
<rect x="345" y="686" width="12.7" height="13" fill="#303030"/><rect x="360" y="686" width="12.7" height="13" fill="#303030"/><rect x="375.2" y="686" width="12.7" height="13" fill="#303030"/>
<path d="M669.5 691L673 694L676.5 691" fill="none" stroke="#a0a0a0" stroke-width="1.1"/>
<rect x="685" y="669" width="1" height="11" fill="#666"/>
</svg>
<div class="t" style="left:109px;top:688px;font:bold 11px 'Liberation Mono',monospace;color:#c0c0c0">1</div>
<div class="t" style="left:142px;top:668px;font-size:12px;letter-spacing:1.8px;color:#c8c8c8">源名称</div>
<div class="t" style="left:160px;top:689px;font:bold 11.5px 'Liberation Mono',monospace;color:#c0c0c0;letter-spacing:-0.05px">Snipast....png</div>
<div class="t" style="left:316px;top:668px;font:italic 13px 'Liberation Serif',serif;color:#b8b8b8">fx</div>
<div class="t" style="left:410px;top:668px;font-size:12px;letter-spacing:1.5px;color:#c8c8c8">模式</div>
<div class="t" style="left:412px;top:688px;font-size:12px;letter-spacing:0.5px;color:#d0d0d0">正常</div>
<div class="t" style="left:629px;top:668px;font-size:12px;color:#c8c8c8">接</div>
<!-- timeline right area -->
<div class="a" style="left:701px;top:634px;width:2px;height:239px;background:#0e0e0e"></div>
<div class="a" style="left:703px;top:704px;width:6px;height:169px;background:#262626"></div>
<div class="a" style="left:709px;top:704px;width:323px;height:169px;background:#303030"></div>
<div class="a" style="left:703px;top:684px;width:6px;height:19px;background:#474747"></div>
<div class="a" style="left:1032px;top:684px;width:7px;height:19px;background:#474747"></div>
<div class="a" style="left:709px;top:686px;width:323px;height:16px;background:linear-gradient(#b4b2d4,#908eba 20%,#8a88b5)"></div>
<svg class="a" style="left:700px;top:630px" width="358" height="75" viewBox="700 630 358 75">
<rect x="703" y="634.5" width="336" height="9" fill="#6a6a6a"/>
<path d="M708.5 634.5V643.5H707A4.5 4.5 0 0 1 707 634.5Z" fill="#2d8ceb"/>
<path d="M1032 634.5V643.5H1034.5A4.5 4.5 0 0 0 1034.5 634.5Z" fill="#2d8ceb"/>
<rect x="703" y="634" width="336" height="1" fill="#0e0e0e"/>
<rect x="703" y="643.5" width="336" height="1" fill="#0e0e0e"/>
<rect x="783.5" y="635" width="2" height="8" fill="#8ab8e8"/>
<rect x="709" y="655.5" width="1" height="7" fill="#aaa"/>
<rect x="924.5" y="656" width="1" height="6.5" fill="#aaa"/>
<rect x="1032.3" y="656" width="1" height="6.5" fill="#aaa"/>
<rect x="703" y="663.3" width="336" height="1.2" fill="#0e0e0e"/>
<rect x="703" y="664.5" width="336" height="14.5" fill="#6a6a6a"/>
<path d="M708 664.5V679H707A4.5 4.5 0 0 1 703 674.5V669A4.5 4.5 0 0 1 707 664.5Z" fill="#2d8ceb"/>
<path d="M1032 664.5V679H1033.5A4.5 4.5 0 0 0 1038.2 674.5V669A4.5 4.5 0 0 0 1033.5 664.5Z" fill="#2d8ceb"/>
<rect x="709" y="680" width="323" height="3" fill="#17c117"/>
<rect x="703" y="683" width="353" height="1" fill="#0e0e0e"/>
<path d="M1043 666H1054.3V675.5L1048.6 679.6L1043 675.5Z" fill="#b8b8b8"/>
<path d="M1047 688L1041 693.5L1047 693.5" fill="none" stroke="#c8c8c8" stroke-width="1.2"/>
<rect x="1047" y="688" width="7" height="7" fill="#c8c8c8"/>
<circle cx="1045.5" cy="696" r="2.6" fill="#232323" stroke="#c8c8c8" stroke-width="1.1"/>
<path d="M779 649H790V657.5L784.5 662.5L779 657.5Z" fill="#2d8ceb"/>
<path d="M783 654H786" stroke="#0e2a50" stroke-width="0.8"/>
</svg>
<div class="a" style="left:783.8px;top:654px;width:1.5px;height:219px;background:#2d8ceb"></div>
<div class="t" style="left:704px;top:648px;font-size:9.5px;letter-spacing:0.5px;color:#b0b0b0">:00s</div>
<div class="t" style="left:808px;top:648px;font-size:9.5px;letter-spacing:0.5px;color:#b0b0b0">05s</div>
<div class="t" style="left:915px;top:648px;font-size:9.5px;letter-spacing:0.5px;color:#b0b0b0">10s</div>
<div class="t" style="left:1023px;top:648px;font-size:9.5px;letter-spacing:0.5px;color:#b0b0b0">15s</div>
<!-- status bar -->
<div class="a" style="left:2px;top:872px;width:806px;height:2px;background:#0e0e0e"></div>
<div class="a" style="left:2px;top:874px;width:1266px;height:17px;background:#232323"></div>
<div class="a" style="left:0;top:891px;width:1269px;height:2px;background:#7a7a7a"></div>
<div class="a" style="left:1268px;top:31px;width:1px;height:862px;background:#6e6e6e"></div>
<svg class="a" style="left:0;top:872px" width="820" height="21" viewBox="0 872 820 21">
<rect x="6.5" y="874.5" width="16" height="15" fill="none" stroke="#2e2e2e"/>
<rect x="24.5" y="874.5" width="16" height="15" fill="none" stroke="#2e2e2e"/>
<g fill="none" stroke="#2d8ceb" stroke-width="1.1">
<path d="M9.5 881V877.5H15V878.8 M11.5 883V879.5H17V880.8"/>
<rect x="13.5" y="881.5" width="6.5" height="6.5"/>
<circle cx="31" cy="880.5" r="3.8"/>
<rect x="31.5" y="881.5" width="6.5" height="6.5"/>
</g>
<path d="M45 881.5L48 877H53L56 881.5L53 886.5H48Z" fill="#909090"/>
<rect x="48" y="877" width="5" height="9.5" fill="#c0c0c0"/>
<path d="M707 883.3L710.5 879.5L712.5 881L714 879.5L717.2 883.3Z" fill="#b0b0b0"/>
<rect x="738" y="882.5" width="38" height="2" fill="#3a3a3a"/>
<circle cx="732.8" cy="883.3" r="4" fill="#232323" stroke="#a0a0a0" stroke-width="1.5"/>
<path d="M788 885L791.5 880.5L793 882L797 878.5L804 885Z" fill="#b0b0b0"/>
</svg>

<!-- RIGHT PANELS -->
<div class="t" style="left:1075px;top:85px;font-size:12px;letter-spacing:1.5px;color:#d0d0d0">信息</div>
<svg class="a" style="left:1110px;top:88px" width="10" height="9"><path d="M1 1.5H9M1 4.5H9M1 7.5H9" stroke="#c4c4c4" stroke-width="1"/></svg>
<div class="a" style="left:1072px;top:102px;width:47px;height:2px;background:#c0c0c0"></div>
<div class="t" style="left:1144px;top:85px;font-size:12px;letter-spacing:1.5px;color:#a0a0a0">音频</div>
<div class="t" style="left:1075px;top:117px;font-size:12px;letter-spacing:1.5px;color:#d0d0d0">预览</div>
<svg class="a" style="left:1110px;top:120px" width="10" height="9"><path d="M1 1.5H9M1 4.5H9M1 7.5H9" stroke="#c4c4c4" stroke-width="1"/></svg>
<svg class="a" style="left:1100px;top:140px" width="125" height="20" viewBox="1100 140 125 20">
<g fill="#a8a8a8">
<rect x="1108" y="147" width="2" height="9.2"/><path d="M1110.5 151.6L1120 147V156.2Z"/>
<path d="M1131 151.6L1140 147V156.2Z"/><rect x="1141" y="147" width="2" height="9.2"/>
<path d="M1157 147L1166.2 151.6L1157 156.2Z"/>
<rect x="1180" y="147" width="2" height="9.2"/><path d="M1183 147L1192.6 151.6L1183 156.2Z"/>
<path d="M1203.6 147L1213 151.6L1203.6 156.2Z"/><rect x="1214" y="147" width="2" height="9.2"/>
</g>
</svg>
<div class="t" style="left:1085px;top:176px;font-size:12px;color:#a0a0a0">库</div>
<div class="t" style="left:1140px;top:176px;font-size:12px;letter-spacing:1.5px;color:#d0d0d0">字符</div>
<svg class="a" style="left:1176px;top:179px" width="10" height="9"><path d="M1 1.5H9M1 4.5H9M1 7.5H9" stroke="#c4c4c4" stroke-width="1"/></svg>
<div class="a" style="left:1137px;top:193px;width:47px;height:2px;background:#c0c0c0"></div>
<div class="t" style="left:1208px;top:176px;font-size:12px;letter-spacing:1.5px;color:#a0a0a0;width:19px;overflow:hidden">画笔</div>
<div class="a" style="left:1227px;top:171px;width:1px;height:21px;background:#3a3a3a"></div>
<svg class="a" style="left:1252px;top:179px" width="12" height="8"><path d="M1 1L4 4L1 7M6 1L9 4L6 7" fill="none" stroke="#c8c8c8" stroke-width="1.6"/></svg>
<div class="a" style="left:1066px;top:205px;width:123px;height:19px;background:#171717;border:1px solid #2c2c2c;border-radius:3px"></div>
<div class="a" style="left:1170px;top:206px;width:1px;height:17px;background:#2c2c2c"></div>
<div class="a" style="left:1066px;top:229px;width:123px;height:19px;background:#171717;border:1px solid #2c2c2c;border-radius:3px"></div>
<div class="a" style="left:1170px;top:230px;width:1px;height:17px;background:#2c2c2c"></div>
<div class="t" style="left:1075px;top:208px;font-size:12px;letter-spacing:1.4px;color:#d8d8d8">汉仪黄科榜书</div>
<div class="a" style="left:1077px;top:239px;width:3px;height:1px;background:#c8a070"></div>
<div class="a" style="left:1155px;top:309px;width:106px;height:18px;background:#1d1d1d;border:1px solid #2c2c2c;border-radius:3px"></div>
<svg class="a" style="left:1060px;top:200px" width="209" height="250" viewBox="1060 200 209 250">
<path d="M1175.5 213L1179.3 216.5L1183 213M1175.5 237L1179.3 240.5L1183 237M1249 316L1252.4 319.5L1255.8 316" fill="none" stroke="#a0a0a0" stroke-width="1.1"/>
<path d="M1195 223.5L1203 215.5L1205.5 218L1197.5 226Z" fill="none" stroke="#b0b0b0" stroke-width="1.2"/>
<path d="M1203 213L1207.5 208.5C1208.5 207.5 1210.5 207.5 1211 209C1211.5 210 1211 211 1210 212L1206 216Z" fill="#b0b0b0"/>
<rect x="1193.5" y="230.5" width="19.5" height="16.5" fill="#fff" stroke="#555"/>
<rect x="1194" y="231" width="18.5" height="7.5" fill="#000"/>
<rect x="1231.5" y="218.5" width="29" height="29" fill="#fff" stroke="#000" stroke-width="1.6"/>
<rect x="1238" y="225" width="15" height="13" fill="#111"/><rect x="1240.5" y="227.5" width="10" height="8" fill="#fff"/>
<path d="M1232 247L1260 219" stroke="#e01010" stroke-width="1.8"/>
<rect x="1218.5" y="205.5" width="29" height="29" fill="#f21010" stroke="#000" stroke-width="1"/>
<rect x="1219" y="235.5" width="11" height="11" fill="#f0f0f0" stroke="#555"/>
<path d="M1220 245.5L1229 236.5" stroke="#e01010" stroke-width="0.8"/>
<path d="M1250 210.5C1253 208 1257 209 1257.5 213" fill="none" stroke="#b8b8b8" stroke-width="1.3"/>
<path d="M1249 208L1249.5 213L1253 210.5Z M1255 213.5H1260L1257.5 217Z" fill="#b8b8b8"/>
<rect x="1066" y="253.5" width="195" height="1" fill="#333"/>
<rect x="1066" y="303" width="195" height="1" fill="#333"/>
<rect x="1066" y="334.5" width="195" height="1" fill="#333"/>
<rect x="1066" y="386.5" width="195" height="1" fill="#333"/>
<g fill="#a8a8a8">
<path d="M1145.6 264.6H1152.2L1148.9 270.4Z M1253 264.6H1259.6L1256.3 270.4Z M1145.6 284.5H1152.2L1148.9 290.3Z M1253 284.5H1259.6L1256.3 290.3Z M1146 315.5H1152.2L1149.1 321.9Z M1146 345.4H1152.2L1149.1 351.8Z M1253 345.4H1259.6L1256.3 351.8Z M1146 366.8H1152.2L1149.1 373.2Z M1253 366.8H1259.6L1256.3 373.2Z"/>
</g>
<g fill="#b8b8b8">
<path d="M1066.5 263H1075V265H1072V272.5H1073.5V273.5H1068V272.5H1069.5V265H1066.5Z"/>
<path d="M1074 259H1085V262.5H1083.8L1083 261H1080.8V271.5H1082.5V273H1076.5V271.5H1078.2V261H1076L1075.2 262.5H1074Z"/>
</g>
<g fill="none" stroke="#b8b8b8" stroke-width="1">
<path d="M1175 262V276M1173 264L1175 261.5L1177 264M1173 274L1175 276.5L1177 274"/>
<path d="M1180 266L1183 259.5L1186 266M1181 264H1185M1178.5 267H1187.5M1180 275.5L1183 269L1186 275.5M1181 273.5H1185M1178.5 276.5H1187.5"/>
</g>
<path d="M1066 282L1070 293L1074 282M1072.5 293L1077.5 282M1075 293L1079 282L1083 293M1076.5 289.5H1081.5M1070 296H1080M1070 296L1072 294.5M1070 296L1072 297.5" fill="none" stroke="#b8b8b8" stroke-width="1.1"/>
<rect x="1173" y="282" width="18.5" height="11" fill="#b8b8b8"/>
<path d="M1175 284L1178 291L1181 284M1180 291L1183.5 284L1187 291M1181.5 289H1185.5" fill="none" stroke="#232323" stroke-width="1.2"/>
<path d="M1173 296.5H1191M1175 295L1173 296.5L1175 298M1189 295L1191 296.5L1189 298" fill="none" stroke="#b8b8b8" stroke-width="1"/>
<g fill="#b8b8b8">
<rect x="1068" y="312" width="14" height="2"/><rect x="1068" y="316" width="14" height="2.5"/><rect x="1068" y="320.5" width="14" height="3.5"/>
</g>
<path d="M1068 343V355M1066.5 345L1068 342.5L1069.5 345M1066.5 353L1068 355.5L1069.5 353" fill="none" stroke="#b8b8b8" stroke-width="1"/>
<path d="M1071 342H1085V345.5H1083.8L1083 344H1079.5V354.5H1081.5V356H1074.5V354.5H1076.5V344H1073L1072.2 345.5H1071Z" fill="#b8b8b8"/>
<path d="M1172.5 343H1189V346.5H1187.8L1187 345H1182.3V354H1184.3V355.5H1177.3V354H1179.3V345H1174.5L1173.7 346.5H1172.5Z" fill="#b8b8b8"/>
<path d="M1173 359H1189M1175 357.5L1173 359L1175 360.5M1187 357.5L1189 359L1187 360.5" fill="none" stroke="#b8b8b8" stroke-width="1"/>
<path d="M1066 375L1069.5 366L1073 375M1067 372H1072M1066 377H1074" fill="none" stroke="#b8b8b8" stroke-width="1"/>
<path d="M1075 370.5H1080M1077.5 380V373.5M1076 375L1077.5 373L1079 375" fill="none" stroke="#b8b8b8" stroke-width="1"/>
<circle cx="1077.5" cy="368" r="1.5" fill="none" stroke="#b8b8b8" stroke-width="0.8"/>
<path d="M1173.5 365V377M1188.5 365V377" stroke="#b8b8b8" stroke-width="1" stroke-dasharray="1 1"/>
<path d="M1173 378.5H1179M1177 377L1179 378.5L1177 380M1189 378.5H1183M1185 377L1183 378.5L1185 380" fill="none" stroke="#b8b8b8" stroke-width="0.9"/>
<rect x="1140.5" y="392.5" width="25" height="20" rx="2.5" fill="#171717" stroke="#2c2c2c"/>
<rect x="1072.5" y="422.5" width="13" height="13" rx="1.5" fill="none" stroke="#9a9a9a" stroke-width="1.4"/>
<rect x="1170.5" y="422.5" width="13" height="13" rx="1.5" fill="none" stroke="#9a9a9a" stroke-width="1.4"/>
</svg>
<div class="t" style="left:1091px;top:260px;font-size:12px;color:#2d8ceb">213 <span style="color:#a8a8a8;letter-spacing:1.5px">像素</span></div>
<div class="t" style="left:1197px;top:260px;font-size:12px;letter-spacing:1.5px;color:#2d8ceb">自动</div>
<div class="t" style="left:1093px;top:280px;font-size:12px;letter-spacing:1.5px;color:#5e5e5e">度量标准</div>
<div class="t" style="left:1195px;top:280px;font-size:12px;color:#2d8ceb">0</div>
<div class="t" style="left:1092px;top:311px;font-size:12px;color:#2d8ceb">- <span style="color:#a8a8a8;letter-spacing:1.5px">像素</span></div>
<div class="t" style="left:1091px;top:342px;font-size:11px;color:#2d8ceb">100 <span style="color:#a89880">%</span></div>
<div class="t" style="left:1196px;top:342px;font-size:11px;color:#2d8ceb">100 <span style="color:#a89880">%</span></div>
<div class="t" style="left:1091px;top:363px;font-size:12px;color:#2d8ceb">-29 <span style="color:#a8a8a8;letter-spacing:1.5px">像素</span></div>
<div class="t" style="left:1196px;top:362px;font-size:11px;color:#2d8ceb">10 <span style="color:#a89880">%</span></div>
<div class="t" style="left:1092px;top:396px;font:bold 14px 'Liberation Serif',serif;color:#b8b8b8">T</div>
<div class="t" style="left:1117px;top:396px;font:italic 14px 'Liberation Serif',serif;color:#b8b8b8">T</div>
<div class="t" style="left:1144px;top:396px;font:bold 14px 'Liberation Serif',serif;color:#2d8ceb;letter-spacing:-0.5px">TT</div>
<div class="t" style="left:1169px;top:396px;font:bold 14px 'Liberation Serif',serif;color:#b8b8b8">T<span style="font-size:10px">T</span></div>
<div class="t" style="left:1201px;top:396px;font:bold 14px 'Liberation Serif',serif;color:#b8b8b8">T<span style="font-size:8px;vertical-align:5px">1</span></div>
<div class="t" style="left:1226px;top:396px;font:bold 14px 'Liberation Serif',serif;color:#b8b8b8">T<span style="font-size:8px;vertical-align:-3px">1</span></div>
<div class="t" style="left:1175px;top:364px;font-size:10px;color:#b8b8b8">あ</div>
<div class="t" style="left:1091px;top:422px;font-size:12px;letter-spacing:1.5px;color:#a8a8a8">连字</div>
<div class="t" style="left:1189px;top:422px;font-size:12px;letter-spacing:1.4px;color:#a8a8a8">印地语数字</div>
<!-- paragraph panel -->
<div class="t" style="left:1061px;top:608px;font-size:12px;letter-spacing:1.2px;color:#a0a0a0;width:37px;overflow:hidden;direction:rtl">跟踪器</div>
<div class="t" style="left:1140px;top:608px;font-size:12px;letter-spacing:1.5px;color:#d0d0d0">段落</div>
<svg class="a" style="left:1176px;top:612px" width="10" height="9"><path d="M1 1.5H9M1 4.5H9M1 7.5H9" stroke="#c4c4c4" stroke-width="1"/></svg>
<div class="a" style="left:1137px;top:625px;width:47px;height:2px;background:#c0c0c0"></div>
<div class="t" style="left:1209px;top:608px;font-size:12px;letter-spacing:1.5px;color:#a0a0a0;width:18px;overflow:hidden">蒙版</div>
<div class="a" style="left:1227px;top:603px;width:1px;height:21px;background:#3a3a3a"></div>
<svg class="a" style="left:1252px;top:612px" width="12" height="8"><path d="M1 1L4 4L1 7M6 1L9 4L6 7" fill="none" stroke="#c8c8c8" stroke-width="1.6"/></svg>
<svg class="a" style="left:1060px;top:630px" width="209" height="80" viewBox="1060 630 209 80">
<rect x="1068" y="633.5" width="20.5" height="21.5" rx="2.5" fill="#171717" stroke="#2c2c2c"/>
<path d="M1071 637.5H1086M1071 641.5H1082M1071 645.5H1086M1071 649.5H1082" stroke="#2d8ceb" stroke-width="1.2"/>
<g stroke="#a8a8a8" stroke-width="1.2">
<path d="M1095 637.5H1111M1097 641.5H1109M1095 645.5H1111M1097 649.5H1109"/>
<path d="M1120 637.5H1135M1124 641.5H1135M1120 645.5H1135M1124 649.5H1135"/>
<path d="M1150.8 637.5H1165.5M1150.8 641.5H1165.5M1150.8 645.5H1165.5M1150.8 649.5H1160"/>
<path d="M1175.6 637.5H1190M1175.6 641.5H1190M1175.6 645.5H1190M1178.5 649.5H1187"/>
<path d="M1200.9 637.5H1215.2M1200.9 641.5H1215.2M1200.9 645.5H1215.2M1206 649.5H1215.2"/>
<path d="M1230.7 637.5H1245.2M1230.7 641.5H1245.2M1230.7 645.5H1245.2M1230.7 649.5H1245.2"/>
</g>
<rect x="1068" y="660.3" width="180" height="1" fill="#333"/>
<g fill="none" stroke="#a8a8a8" stroke-width="1">
<path d="M1068 670H1073M1071.5 668.5L1073 670L1071.5 671.5M1075.5 664V678M1078 665.5H1084M1078 668.5H1083M1078 671.5H1084M1078 674.5H1083"/>
<path d="M1139.5 670H1144M1142.5 668.5L1144 670L1142.5 671.5M1146 665.5H1155V671H1146ZM1146 674H1155M1146 677H1153"/>
<path d="M1205 664.5H1210M1208.5 663L1210 664.5L1208.5 666M1212 667.5H1221M1214 670.5H1221M1212 673.5H1221M1214 676.5H1221"/>
<path d="M1068 683.5H1076M1068 686.5H1074M1068 689.5H1076M1068 692.5H1074M1078 682V695M1084 688H1080M1081.5 686.5L1080 688L1081.5 689.5"/>
<path d="M1146 681.5H1153M1146 684.5H1155M1146 687.5H1155V693H1146ZM1139.5 692H1144M1142.5 690.5L1144 692L1142.5 693.5"/>
</g>
<rect x="1205" y="683.5" width="20.5" height="22" rx="2.5" fill="#171717" stroke="#2c2c2c"/>
<path d="M1207 687.5L1212 691.5L1207 695.5Z" fill="#2d8ceb"/>
<path d="M1216.5 687H1223.5M1218.5 687V698M1221.5 687V698" stroke="#2d8ceb" stroke-width="1.4"/>
<circle cx="1216" cy="690" r="3" fill="#2d8ceb"/>
<path d="M1233 687H1240M1235 687V698M1238 687V698" stroke="#a8a8a8" stroke-width="1.4"/>
<circle cx="1232.5" cy="690" r="3" fill="#a8a8a8"/>
<path d="M1246.5 687.5L1241.5 691.5L1246.5 695.5Z" fill="#a8a8a8"/>
</svg>
<div class="t" style="left:1089px;top:664px;font-size:12px;color:#2d8ceb">0 <span style="color:#a8a8a8;letter-spacing:1.5px">像素</span></div>
<div class="t" style="left:1162px;top:664px;font-size:12px;color:#2d8ceb">0 <span style="color:#a8a8a8;letter-spacing:1.5px">像素</span></div>
<div class="t" style="left:1227px;top:664px;font-size:12px;color:#2d8ceb">0 <span style="color:#a8a8a8;letter-spacing:1.5px">像素</span></div>
<div class="t" style="left:1089px;top:682px;font-size:12px;color:#2d8ceb">0 <span style="color:#a8a8a8;letter-spacing:1.5px">像素</span></div>
<div class="t" style="left:1162px;top:683px;font-size:12px;color:#2d8ceb">0 <span style="color:#a8a8a8;letter-spacing:1.5px">像素</span></div>

<!-- DROPDOWN MENU -->
<div class="a" style="left:464px;top:597px;width:168px;height:152px;background:rgba(0,0,0,0.35);filter:blur(1.5px)"></div>
<div class="a" style="left:463px;top:595px;width:167px;height:152px;background:#f2f2f2;border:1px solid #b8b8b8"></div>
<div class="a" style="left:494px;top:645px;width:133px;height:1px;background:#d5d5d5"></div>
<div class="a" style="left:494px;top:718px;width:133px;height:1px;background:#d5d5d5"></div>
<div class="a" style="left:466px;top:671px;width:22px;height:22px;background:#99ccf3"></div>
<div class="a" style="left:466px;top:693px;width:161px;height:22px;background:#99ccf3"></div>
<svg class="a" style="left:471px;top:677px" width="12" height="9"><path d="M1 4.5L4 7.5L11 1" fill="none" stroke="#333" stroke-width="1.6"/></svg>
<div class="t" style="left:498px;top:602px;font-size:12px;color:#000">标题/动作安全</div>
<div class="t" style="left:498px;top:624px;font-size:12px;color:#000">对称网格</div>
<div class="t" style="left:498px;top:653px;font-size:12px;color:#000">网格</div>
<div class="t" style="left:498px;top:676px;font-size:12px;color:#000">参考线</div>
<div class="t" style="left:498px;top:697px;font-size:12px;color:#000">标尺</div>
<div class="t" style="left:498px;top:727px;font-size:12px;color:#8d8d8d">3D 参考轴</div>
<!-- WATERMARK -->
<svg class="a" style="left:960px;top:750px" width="309" height="143" viewBox="960 750 309 143">
<g fill="#bdbdbd">
<ellipse cx="1076.3" cy="768.8" rx="8" ry="11.2"/>
<ellipse cx="1096.4" cy="770.1" rx="8.5" ry="10.7"/>
<ellipse cx="1060.4" cy="784.9" rx="8.3" ry="10.7"/>
<ellipse cx="1109.1" cy="789.8" rx="8" ry="10.7"/>
<path d="M1084 786.5C1078 786.5 1074 792 1068 800C1062 807 1056 812 1056.5 820C1057 828 1064 832 1072 831C1078 830 1081 829 1084 829C1087 829 1090 830 1096 831C1104 832 1111 828 1111.5 820C1112 812 1106 807 1100 800C1094 792 1090 786.5 1084 786.5Z"/>
</g>
<g fill="none" stroke="#232323" stroke-width="2.4">
<path d="M1080.5 798V813"/><circle cx="1075" cy="808.5" r="5"/>
<path d="M1086.5 805V809.5C1086.5 812 1088 813 1091 813C1094 813 1095.5 812 1095.5 809.5V805"/>
</g>
</svg>
<div class="t" style="left:974px;top:781px;font:bold 51px 'Liberation Sans',sans-serif;color:#bdbdbd;letter-spacing:1.6px">Bai</div>
<div class="t" style="left:1120px;top:784px;font:bold 36px 'Liberation Sans',sans-serif;color:#bdbdbd;letter-spacing:2px">经验</div>
<div class="t" style="left:974px;top:834px;font:bold 26px 'Liberation Sans',sans-serif;color:#bdbdbd;letter-spacing:0.3px">jingyan</div>
<div class="a" style="left:1059px;top:835px;width:3px;height:37px;background:#1aa070"></div>
<div class="a" style="left:1062px;top:813px;width:207px;height:80px;background:linear-gradient(180deg,#9adcea 0%,#86c4e4 45%,#5b8fd0 100%)"></div>
<div class="a" style="left:1062px;top:813px;width:207px;height:80px;background:linear-gradient(90deg,rgba(70,110,200,0.35) 0%,rgba(70,110,200,0) 40%)"></div>
<div class="t" style="left:1090px;top:821px;font:bold 30px 'Liberation Sans',sans-serif;letter-spacing:1.5px;color:#1fa8a0">我爱学教程</div>
<div class="t" style="left:1096px;top:864px;font:bold 19.5px 'Liberation Sans',sans-serif;color:#2ea868">www.52xjc.com</div>
</body></html>
